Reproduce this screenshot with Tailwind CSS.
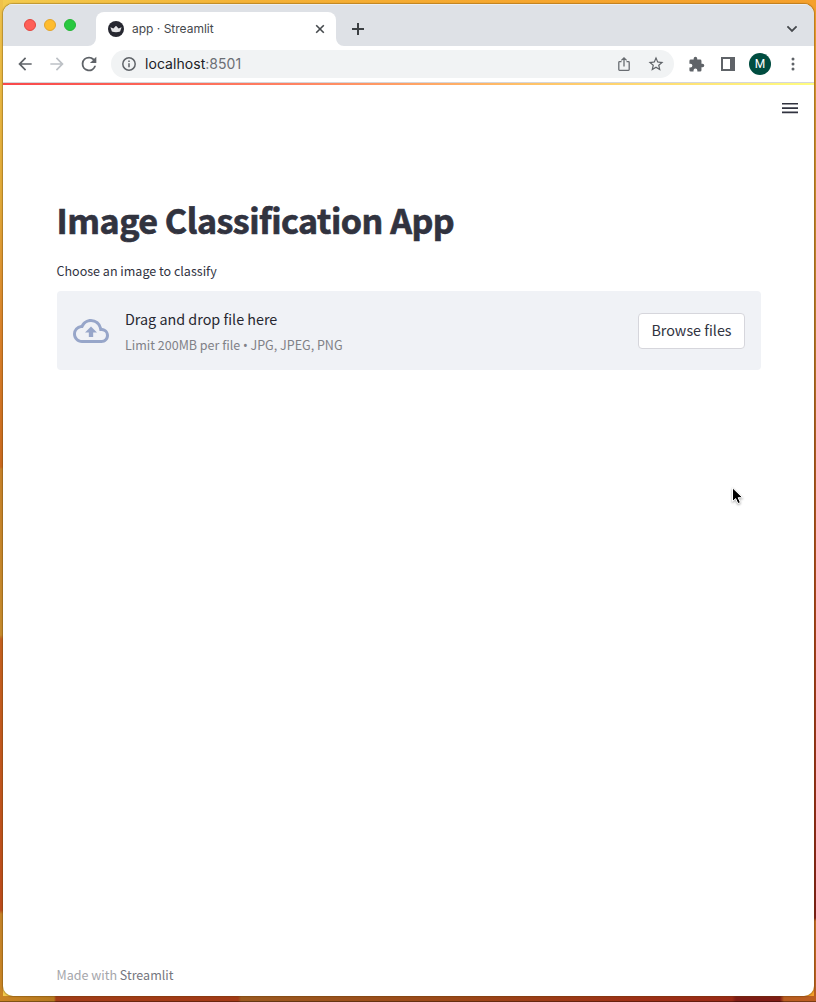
<!DOCTYPE html>
<html lang="en">
<head>
<meta charset="utf-8">
<title>app · Streamlit</title>
<script src="https://cdn.jsdelivr.net/npm/@tailwindcss/browser@4"></script>
</head>
<body class="relative h-[1002px] w-[816px] overflow-hidden bg-[linear-gradient(90deg,#f3cb4e_0%,#f4b236_30%,#f6a62e_65%,#f5a02c_100%)] font-['Noto_Sans_CJK_SC',sans-serif] text-[#31333f]">
<div class="absolute left-0 top-0 h-full w-[3px] bg-[linear-gradient(180deg,#efc24a_0px,#e0a838_200px,#d9812a_330px,#c9681e_467px,#c68129_469px,#c58a2c_635px,#c4601f_639px,#bb4a1c_910px,#c48329_914px,#c98424_1002px)]"></div>
<div class="absolute right-0 top-0 h-full w-[2px] bg-[linear-gradient(180deg,#f5a02c_0px,#d1922f_110px,#b87929_330px,#ad5c22_440px,#a8431b_600px,#942b18_800px,#7c1c18_918px,#c26a23_921px,#b85c20_1002px)]"></div>
<div class="absolute bottom-0 left-0 h-[6px] w-full bg-[linear-gradient(90deg,#c98424_0px,#b6791f_54px,#a33d18_56px,#a33a16_238px,#9c5a20_241px,#9c4818_450px,#9e3016_640px,#9a2a16_732px,#7e1c15_736px,#7e1c15_780px,#b85c20_784px,#bd5e20_816px)]"></div>
<div class="absolute bottom-0 left-0 h-px w-full bg-black/35"></div>

<div class="relative ml-[3px] flex h-[996px] w-[811px] flex-col pt-1">
<main class="flex h-[992px] flex-col overflow-hidden rounded-[10px] bg-white shadow-[0_0_1px_1px_rgba(90,60,10,0.35)]">
  <div class="flex h-[42px] shrink-0 bg-[#dee1e6] pt-2 shadow-[inset_0_1px_0_#eceef1]">
    <div class="ml-[21px] flex gap-2 pt-[7px]">
      <span class="size-3 rounded-full border border-[#e2463f] bg-[#fe5f57]"></span>
      <span class="size-3 rounded-full border border-[#e1a32b] bg-[#febc2e]"></span>
      <span class="size-3 rounded-full border border-[#24b536] bg-[#28c840]"></span>
    </div>
    <div class="relative ml-[20px] flex h-[34px] w-[240px] items-center rounded-t-[8px] bg-white">
      <svg class="absolute -left-2 bottom-0 size-2" viewBox="0 0 8 8"><path d="M8 0v8H0a8 8 0 0 0 8-8z" fill="#fff"/></svg>
      <svg class="absolute -right-2 bottom-0 size-2" viewBox="0 0 8 8"><path d="M0 0v8h8a8 8 0 0 1-8-8z" fill="#fff"/></svg>
      <svg class="ml-3 size-4" viewBox="0 0 16 16"><circle cx="8" cy="8" r="8" fill="#262730"/><path d="M2.400 6.200l3 1.300L8 4.800l2.600 2.700 3-1.300-1.500 4.400q-4.100 1.200-8.200 0z" fill="#e4e4e6"/></svg>
      <span class="ml-2 w-[110px] whitespace-nowrap font-['Inter',sans-serif] text-[12px] text-[#45484c]">app · Streamlit</span>
      <svg class="ml-[72px] size-3" viewBox="0 0 12 12" fill="none" stroke="#45494d" stroke-width="1.6"><path d="M2.200 2.200l7.600 7.600M9.800 2.200L2.200 9.800"/></svg>
    </div>
    <svg class="ml-[15px] mt-[10px] size-[14px]" viewBox="0 0 14 14" stroke="#3c4043" stroke-width="2"><path d="M7 1v12M1 7h12"/></svg>
    <svg class="ml-auto mr-4 mt-[11px] size-3" viewBox="0 0 12 12" fill="none" stroke="#45494d" stroke-width="1.8"><path d="M1.400 3.400L6 8l4.600-4.600"/></svg>
  </div>
  <div class="flex h-9 shrink-0 items-center">
    <svg class="ml-[12px] size-5" viewBox="0 0 24 24" fill="#5f6368"><path d="M20 11H7.830l5.590-5.590L12 4l-8 8 8 8 1.410-1.410L7.830 13H20v-2z"/></svg>
    <svg class="ml-[12px] size-5" viewBox="0 0 24 24" fill="#bdc1c6"><path d="M12 4l-1.410 1.410L16.170 11H4v2h12.170l-5.580 5.590L12 20l8-8z"/></svg>
    <svg class="ml-[11px] size-[22px]" viewBox="0 0 24 24" fill="#5f6368"><path d="M17.650 6.350A7.960 7.960 0 0 0 12 4a8 8 0 1 0 7.730 10h-2.080A6 6 0 1 1 12 6c1.660 0 3.140.69 4.220 1.780L13 11h7V4l-2.350 2.350z"/></svg>
    <div class="ml-[11px] flex h-7 w-[563px] items-center rounded-full bg-[#f1f3f4]">
      <svg class="ml-[10px] size-4" viewBox="0 0 16 16" fill="none" stroke="#5f6368" stroke-width="1.5"><circle cx="8" cy="8" r="6.200"/><path d="M8 7.200v4M8 4.500v1.600"/></svg>
      <span class="ml-2 w-[200px] font-['Inter',sans-serif] text-[14px] leading-[20px] tracking-[0.05px] text-[#202124]">localhost<span class="text-[#6b6f74]">:8501</span></span>
      <svg class="ml-auto size-4" viewBox="0 0 16 16" fill="none" stroke="#686c71" stroke-width="1.300"><path d="M5.500 5.600H3.600a.8.8 0 0 0-.8.8v7.200c0 .5.3.8.8.8h8.800c.5 0 .8-.3.8-.8V6.400a.8.8 0 0 0-.8-.8h-1.900M8 10.400V2M5.400 4.400L8 1.800l2.600 2.600"/></svg>
      <svg class="ml-[15px] mr-[9px] size-[18px]" viewBox="0 0 24 24" fill="#5f6368"><path d="M22 9.240l-7.190-.62L12 2 9.190 8.630 2 9.240l5.460 4.730L5.820 21 12 17.270 18.180 21l-1.630-7.030L22 9.240zM12 15.400l-3.760 2.270 1-4.280-3.320-2.880 4.380-.38L12 6.100l1.710 4.040 4.380.38-3.320 2.880 1 4.280L12 15.400z"/></svg>
    </div>
    <svg class="ml-[14px] size-[17px]" viewBox="0 0 24 24" fill="#5f6368"><path d="M20.500 11H19V7a2 2 0 0 0-2-2h-4V3.500a2.500 2.500 0 0 0-5 0V5H4a2 2 0 0 0-1.990 2v3.800H3.500a2.700 2.700 0 0 1 0 5.400H2V20a2 2 0 0 0 2 2h3.800v-1.500a2.700 2.700 0 0 1 5.400 0V22H17a2 2 0 0 0 2-2v-4h1.500a2.500 2.500 0 0 0 0-5z"/></svg>
    <svg class="ml-[16px] size-[14px]" viewBox="0 0 14 14"><path fill="#5f6368" fill-rule="evenodd" d="M0 0h14v14H0zM2 2v10h7V2z"/></svg>
    <span class="ml-[14px] flex size-[22px] items-center justify-center rounded-full bg-[#004d40] font-[Roboto,sans-serif] text-[12px] text-white">M</span>
    <svg class="ml-[19.500px] h-4 w-1" viewBox="0 0 4 16" fill="#5f6368"><circle cx="2" cy="3" r="1.500"/><circle cx="2" cy="8" r="1.500"/><circle cx="2" cy="13" r="1.500"/></svg>
  </div>
  <div class="h-px shrink-0 bg-[#d4d6dc]"></div>
  <div class="h-[2px] shrink-0 bg-[linear-gradient(90deg,#f9484b,#ff8162_35%,#ffc268_65%,#fffd80)]"></div>
  <div class="flex h-[111px] shrink-0 justify-end pr-[16px] pt-[18px]">
    <svg class="h-[11px] w-4" viewBox="0 0 16 11" stroke="#31333f" stroke-width="1.600"><path d="M0 .8h16M0 5.100h16M0 9.400h16"/></svg>
  </div>
  <section class="ml-[54px] flex w-[704px] grow flex-col">
    <h1 class="-ml-[0.5px] h-[53px] whitespace-nowrap text-[34px] font-bold leading-[48px] tracking-[-0.48px] [-webkit-text-stroke:0.7px_#31333f]">Image Classification App</h1>
    <p class="-ml-[0.5px] mt-[11px] h-[22px] whitespace-nowrap text-[12.53px] leading-[22px]">Choose an image to classify</p>
    <div class="mt-[9px] flex h-[79px] items-center rounded-[4px] bg-[#f0f2f6] px-4">
      <svg class="size-9" viewBox="0 0 24 24" fill="#97a6c9"><path d="M19.350 10.040A7.490 7.490 0 0 0 12 4C9.110 4 6.600 5.640 5.350 8.040A5.994 5.994 0 0 0 0 14c0 3.310 2.690 6 6 6h13c2.760 0 5-2.240 5-5 0-2.640-2.050-4.780-4.650-4.960zM19 18H6c-2.210 0-4-1.790-4-4 0-2.050 1.530-3.760 3.560-3.970l1.070-.11.5-.95A5.469 5.469 0 0 1 12 6c2.620 0 4.880 1.860 5.390 4.430l.3 1.500 1.530.11A2.980 2.980 0 0 1 22 15c0 1.650-1.350 3-3 3zM8 13h2.550v3h2.900v-3H16l-4-4z"/></svg>
      <div class="ml-4 flex flex-col whitespace-nowrap pt-px">
        <span class="h-[26px] text-[14.35px] leading-[26px] text-[#262730]">Drag and drop file here</span>
        <span class="h-[25px] text-[12.53px] leading-[25px] text-[#808187]">Limit 200MB per file <span class="font-['Noto_Sans',sans-serif] leading-none">•</span> JPG, JPEG, PNG</span>
      </div>
      <button class="ml-auto flex h-9 w-[107px] items-center justify-center whitespace-nowrap rounded-[4px] border border-[#d6d6dc] bg-white pb-px text-[14.35px]">Browse files</button>
    </div>
    <footer class="-ml-[0.5px] mb-[9px] mt-auto h-[24px] whitespace-nowrap text-[12.53px] leading-[24px] text-[#a5a6ab]">Made with <span class="text-[#75767e]">Streamlit</span></footer>
  </section>
</main>
</div>
<svg class="absolute left-[731px] top-[486px] h-[20px] w-[14px] drop-shadow-[0_1px_1px_rgba(0,0,0,0.35)]" viewBox="0 0 14 20"><path d="M1.500 1.800v13.700l3.200-2.900 2.200 5 2.500-1.100-2.200-4.800h4.500z" fill="#000" stroke="#fff" stroke-width="1"/></svg>
</body>
</html>
